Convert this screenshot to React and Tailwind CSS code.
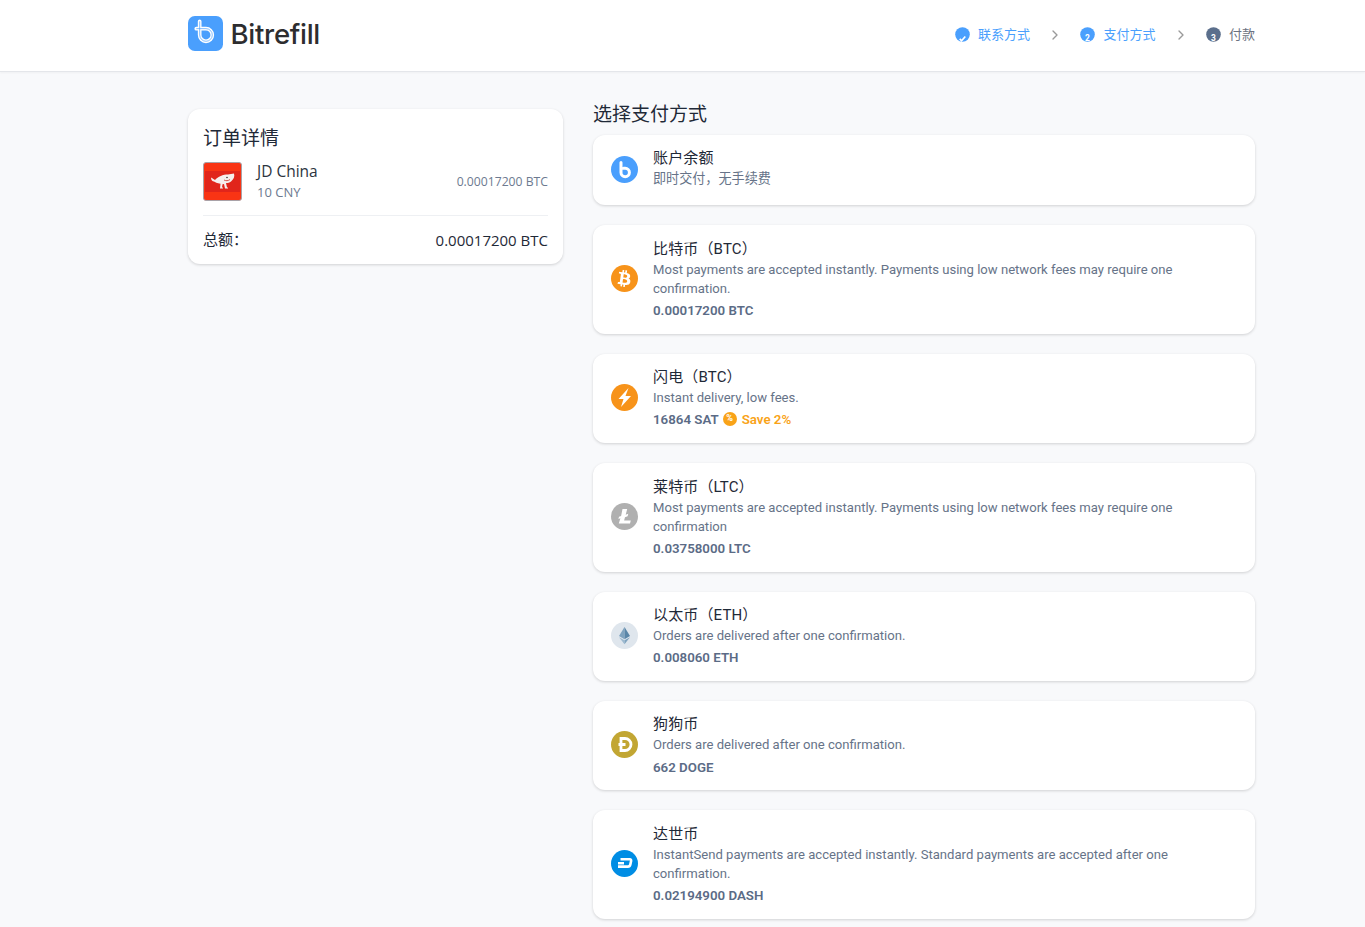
import { ChevronRight } from "lucide-react";
import { FaBtc } from "react-icons/fa";

const CJK = "font-['Roboto','Noto_Sans_CJK_SC',sans-serif]";

function BrandMark({ className }) {
  const d = "M12 5.500v14a6.500 6.500 0 1 0 6.500-6.500H8.500";
  return (
    <svg viewBox="0 0 36 36" className={className}>
      <rect width="36" height="36" rx="7" fill="#4a9ffd" />
      <path d={d} fill="none" stroke="#fff" strokeWidth="3.8" strokeLinecap="round" />
      <path d={d} fill="none" stroke="#4a9ffd" strokeWidth="0.7" />
    </svg>
  );
}

function Step({ n, label, color, check }) {
  return (
    <div className="flex items-center gap-2">
      <svg viewBox="0 0 16 16" className="h-[15px] w-[15px]">
        <circle cx="8" cy="8" r="7.8" fill={color} />
        {check ? (
          <path d="M5 12.600l2 2 4-4.500" fill="none" stroke="#fff" strokeWidth="1.800" />
        ) : (
          <text x="8" y="15" textAnchor="middle" fontSize="9" fontWeight="700" fill="#fff" fontFamily="Roboto, sans-serif">
            {n}
          </text>
        )}
      </svg>
      <span className={n < 3 ? "text-[13px] text-[#4a9ffd]" : "text-[13px] text-[#6b7280]"}>{label}</span>
    </div>
  );
}

function Header() {
  return (
    <header className="h-[72px] border-b border-[#e4e6ea] bg-white shadow-[0_1px_2px_rgba(0,0,0,0.04)]">
      <div className="ml-[188px] flex h-full w-[1067px] items-center justify-between">
        <div className="flex items-center gap-[7.5px] pb-[5px]">
          <BrandMark className="h-[35px] w-[35px]" />
          <span className="pt-[4px] font-['Inter',sans-serif] text-[27.6px] font-medium leading-none tracking-[-0.3px] text-[#2d2d2f]">
            Bitrefill
          </span>
        </div>
        <div className="flex items-center pb-[2px]">
          <Step n={1} check label="联系方式" color="#4a9ffd" />
          <ChevronRight className="mx-[17.25px] h-[16px] w-[16px] text-[#9a9a9a]" strokeWidth={2} />
          <Step n={2} label="支付方式" color="#4a9ffd" />
          <ChevronRight className="mx-[17.25px] h-[16px] w-[16px] text-[#9a9a9a]" strokeWidth={2} />
          <Step n={3} label="付款" color="#5b6f8c" />
        </div>
      </div>
    </header>
  );
}

function JdLogo() {
  return (
    <div className="flex h-[39px] w-[39px] items-center justify-center rounded-[3px] border border-[#a9a2a8] bg-[#f93414]">
      <div className="flex h-[21px] w-[35px] items-center justify-center bg-[#e1251b]">
        <svg viewBox="0 0 26 18" className="h-[19px] w-[26px]">
          <path
            d="M1 5c2 1 3 2 4 2.500C8 4 13 2 18 2l6-1c1 3-.5 6-3 8-1.500 1-3 1.500-5 1.600l1 4.400h1v1h-3l-1-4.500-1.500.2-.5 3.300h1v1h-3l.500-4.800C7 11 5 9.500 4 9 2.500 9 1 7.500 1 5z"
            fill="#f6efee"
          />
          <circle cx="17" cy="5" r="0.8" fill="#333" />
          <path d="M14 7.500c2 1 4 1 6-.5" fill="none" stroke="#c9332a" strokeWidth="0.8" />
        </svg>
      </div>
    </div>
  );
}

function OrderCard() {
  return (
    <div className="w-[375px] rounded-[12px] bg-white px-[15px] pt-[15px] shadow-[0_1px_3px_rgba(0,0,0,0.16)]">
      <h2 className="text-[19px] leading-[29px] text-[#1f2937]">订单详情</h2>
      <div className="mt-[7px] flex items-center border-b border-[#eef0f3] pb-[13px]">
        <JdLogo />
        <div className="ml-[15px] font-['Open_Sans',sans-serif]">
          <div className="text-[15.5px] leading-[22px] text-[#2c3440]">JD China</div>
          <div className="text-[13px] leading-[20px] text-[#6d7a90]">10 CNY</div>
        </div>
        <div className="ml-auto pt-[2px] font-['Open_Sans',sans-serif] text-[12.2px] text-[#6d7a90]">0.00017200 BTC</div>
      </div>
      <div className="flex h-[48px] items-center justify-between font-['Open_Sans',sans-serif]">
        <span className={`text-[15px] text-[#1f2937] ${CJK}`}>总额：</span>
        <span className="text-[15px] font-medium text-[#1f2937]">0.00017200 BTC</span>
      </div>
    </div>
  );
}

function CoinBadge({ bg, children }) {
  return (
    <div className={`mb-[2px] flex h-[27px] w-[27px] shrink-0 items-center justify-center rounded-full ${bg}`}>{children}</div>
  );
}

const methods = [
  {
    name: "账户余额",
    desc: "即时交付，无手续费",
    bg: "bg-[#4a9ffd]",
    icon: (
      <svg viewBox="0 0 27 27" className="h-[27px] w-[27px]">
        <path d="M10 6.500v10a4.200 4.200 0 1 0 4.200-4.200h-1.700" fill="none" stroke="#fff" strokeWidth="3" strokeLinecap="round" />
      </svg>
    ),
  },
  {
    name: "比特币（BTC）",
    desc: "Most payments are accepted instantly. Payments using low network fees may require one confirmation.",
    amount: "0.00017200 BTC",
    bg: "bg-[#f7931a]",
    icon: <FaBtc className="h-[17px] w-[17px] rotate-[8deg] text-white" />,
  },
  {
    name: "闪电（BTC）",
    desc: "Instant delivery, low fees.",
    amount: "16864 SAT",
    save: "Save 2%",
    bg: "bg-[#f7931a]",
    icon: (
      <svg viewBox="0 0 27 27" className="h-[27px] w-[27px]">
        <path d="M17.500 4L7.500 15h5l-2.500 8L20 12h-5.500z" fill="#fff" />
      </svg>
    ),
  },
  {
    name: "莱特币（LTC）",
    desc: "Most payments are accepted instantly. Payments using low network fees may require one confirmation",
    amount: "0.03758000 LTC",
    bg: "bg-[#b0b0b0]",
    icon: (
      <svg viewBox="0 0 27 27" className="h-[27px] w-[27px]">
        <path d="M11.500 6h4.700l-1.500 5.800 2.600-1-.7 2.400-2.600 1-.9 3.200h6.700l-.8 3.100H7.800l1.600-5.300-2 .8.600-2.200 2.100-.9z" fill="#fff" />
      </svg>
    ),
  },
  {
    name: "以太币（ETH）",
    desc: "Orders are delivered after one confirmation.",
    amount: "0.008060 ETH",
    bg: "bg-[#dfe6ed]",
    icon: (
      <svg viewBox="0 0 27 27" className="h-[27px] w-[27px]">
        <path d="M13.500 5l-5.500 9 5.500 3.200z" fill="#7fa3bf" />
        <path d="M13.500 5l5.500 9-5.500 3.200z" fill="#5a86a8" />
        <path d="M8 15.200l5.500 7v-4z" fill="#9dbad0" />
        <path d="M19 15.200l-5.500 7v-4z" fill="#7fa3bf" />
      </svg>
    ),
  },
  {
    name: "狗狗币",
    desc: "Orders are delivered after one confirmation.",
    amount: "662 DOGE",
    bg: "bg-[#c2a633]",
    icon: (
      <svg viewBox="0 0 27 27" className="h-[27px] w-[27px]">
        <path d="M10 7.500h4a6 6 0 0 1 0 12h-4zM7.500 13.500h7" fill="none" stroke="#fff" strokeWidth="2.800" />
      </svg>
    ),
  },
  {
    name: "达世币",
    desc: "InstantSend payments are accepted instantly. Standard payments are accepted after one confirmation.",
    amount: "0.02194900 DASH",
    bg: "bg-[#008de4]",
    icon: (
      <svg viewBox="0 0 27 27" className="h-[27px] w-[27px]">
        <path d="M9.500 9.300h9.300c1 0 1.500.7 1.300 1.700l-.8 3.600c-.3 1.300-1.100 2-2.400 2H7M7 13.300h6" fill="none" stroke="#fff" strokeWidth="2.600" />
      </svg>
    ),
  },
];

function MethodCard({ method }) {
  return (
    <div className="flex min-h-[70px] items-center rounded-[12px] bg-white pl-[18px] pr-[80px] shadow-[0_1px_3px_rgba(0,0,0,0.16)]">
      <CoinBadge bg={method.bg}>{method.icon}</CoinBadge>
      <div className={method.amount ? "ml-[15px] self-start pb-[11px] pt-[12.5px]" : "ml-[15px] self-start pb-[11px] pt-[11.5px]"}>
        <div className="text-[15px] leading-[22px] tracking-[0.15px] text-[#1f2937]">{method.name}</div>
        <div className="text-[13.1px] leading-[19.25px] text-[#667388]">{method.desc}</div>
        {method.amount && (
          <div className="mt-[1.5px] flex h-[23px] items-center text-[13.3px] font-semibold text-[#5b6b86]">
            {method.amount}
            {method.save && (
              <>
                <span className="mb-[3px] ml-[4px] flex h-[14px] w-[14px] items-center justify-center rounded-full bg-[#f9a318] text-[9px] font-bold leading-none text-white">
                  %
                </span>
                <span className="ml-[5px] text-[#f9a318]">{method.save}</span>
              </>
            )}
          </div>
        )}
      </div>
    </div>
  );
}

export default function App() {
  return (
    <div className={`h-[927px] overflow-hidden bg-[#f8f9fb] ${CJK}`}>
      <Header />
      <main className="ml-[188px] flex w-[1067px] gap-[30px]">
        <div className="pt-[37px]">
          <OrderCard />
        </div>
        <div className="w-[662px] pt-[28px]">
          <h1 className="text-[19px] leading-[29px] text-[#1f2937]">选择支付方式</h1>
          <div className="mt-[6px] flex flex-col gap-[20.1px]">
            {methods.map((m) => (
              <MethodCard key={m.name} method={m} />
            ))}
          </div>
        </div>
      </main>
    </div>
  );
}
